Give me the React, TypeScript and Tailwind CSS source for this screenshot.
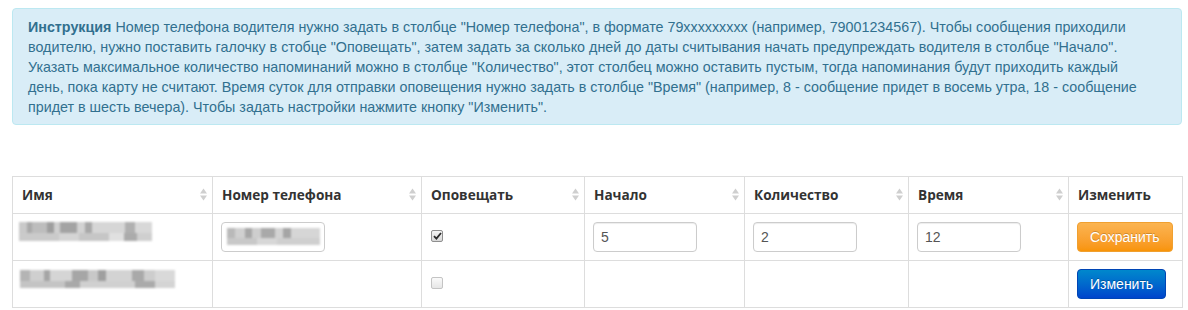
import React from "react";

type Block = [number, string];

function Mosaic({ top, bottom, topH, bottomH }: { top: Block[]; bottom: Block[]; topH: number; bottomH: number }) {
  const w = top.reduce((s, b) => s + b[0], 0);
  let x1 = 0;
  let x2 = 0;
  return (
    <svg width={w} height={topH + bottomH} className="block" style={{ filter: "blur(0.8px)" }}>
      {top.map(([bw, c], i) => {
        const el = <rect key={"t" + i} x={x1} y={0} width={bw} height={topH} fill={c} />;
        x1 += bw;
        return el;
      })}
      {bottom.map(([bw, c], i) => {
        const el = <rect key={"b" + i} x={x2} y={topH} width={bw} height={bottomH} fill={c} />;
        x2 += bw;
        return el;
      })}
    </svg>
  );
}

function SortIcon() {
  return (
    <svg width="7" height="13" viewBox="0 0 7 13" className="block">
      <polygon points="0,5.5 3.5,0.5 7,5.5" fill="#cfcfcf" />
      <polygon points="0,7.5 7,7.5 3.5,12.5" fill="#cfcfcf" />
    </svg>
  );
}

function Th({ children, sort = true }: { children: React.ReactNode; sort?: boolean }) {
  return (
    <th className="border border-[#dddddd] h-[37px] pl-[9px] pr-[5px] text-left align-middle font-bold text-[13.6px] text-[#333333] font-['Open_Sans',sans-serif]">
      <div className="flex items-center justify-between">
        <span>{children}</span>
        {sort && <SortIcon />}
      </div>
    </th>
  );
}

function Input({ value }: { value: string }) {
  return (
    <div className="w-[104px] h-[30px] border border-[#cccccc] rounded-[4px] shadow-[inset_0_1px_1px_rgba(0,0,0,0.075)] px-[7px] flex items-center text-[14px] text-[#555555] bg-white">
      {value}
    </div>
  );
}

function Checkbox({ checked }: { checked: boolean }) {
  return (
    <div
      className={
        "w-[12px] h-[12px] rounded-[2px] border flex items-center justify-center " +
        (checked ? "border-[#8f8f8f] bg-gradient-to-b from-[#f4f4f4] to-[#d8d8d8]" : "border-[#c4c4c4] bg-gradient-to-b from-[#fafafa] to-[#e6e6e6]")
      }
    >
      {checked && (
        <svg width="9" height="8" viewBox="0 0 9 8" className="block">
          <path d="M1 4.2 L3.4 6.6 L8 1" stroke="#2a2a2a" strokeWidth="1.8" fill="none" />
        </svg>
      )}
    </div>
  );
}

export default function App() {
  const td = "border border-[#dddddd] px-[8px] pt-[8px] pb-[8px] align-top";
  return (
    <div className="w-[1188px] h-[310px] bg-white overflow-hidden font-['Liberation_Sans',Arial,sans-serif]">
      <div className="ml-[12px] mt-[8px] w-[1170px] h-[117px] bg-[#d9edf7] border border-[#bce8f1] rounded-[4px] pl-[15px] pr-[10px] py-[8px] text-[14.3px] leading-[20px] text-[#31708f] whitespace-nowrap">
        <b>Инструкция</b> Номер телефона водителя нужно задать в столбце "Номер телефона", в формате 79xxxxxxxxx (например, 79001234567). Чтобы сообщения приходили
        <br />
        водителю, нужно поставить галочку в стобце "Оповещать", затем задать за сколько дней до даты считывания начать предупреждать водителя в столбце "Начало".
        <br />
        Указать максимальное количество напоминаний можно в столбце "Количество", этот столбец можно оставить пустым, тогда напоминания будут приходить каждый
        <br />
        день, пока карту не считают. Время суток для отправки оповещения нужно задать в столбце "Время" (например, 8 - сообщение придет в восемь утра, 18 - сообщение
        <br />
        придет в шесть вечера). Чтобы задать настройки нажмите кнопку "Изменить".
      </div>

      <table className="ml-[12px] mt-[51px] w-[1170px] table-fixed border-collapse">
        <colgroup>
          <col className="w-[200px]" />
          <col className="w-[209px]" />
          <col className="w-[163px]" />
          <col className="w-[160px]" />
          <col className="w-[164px]" />
          <col className="w-[160px]" />
          <col className="w-[114px]" />
        </colgroup>
        <thead>
          <tr>
            <Th>Имя</Th>
            <Th>Номер телефона</Th>
            <Th>Оповещать</Th>
            <Th>Начало</Th>
            <Th>Количество</Th>
            <Th>Время</Th>
            <Th sort={false}>Изменить</Th>
          </tr>
        </thead>
        <tbody>
          <tr className="h-[47px]">
            <td className={td + " pl-[6px]"}>
              <Mosaic
                topH={11}
                bottomH={8}
                top={[[8, "#c9c9c9"], [5, "#a9a9a9"], [15, "#bdbdbd"], [7, "#9e9e9e"], [6, "#cfcfcf"], [17, "#a3a3a3"], [8, "#d2d2d2"], [7, "#a8a8a8"], [33, "#d6d6d6"], [10, "#b0b0b0"], [17, "#d8d8d8"]]}
                bottom={[[40, "#cacaca"], [20, "#d4d4d4"], [30, "#c6c6c6"], [15, "#e0e0e0"], [13, "#ababab"], [15, "#cfcfcf"]]}
              />
            </td>
            <td className={td}>
              <div className="w-[104px] h-[30px] border border-[#cccccc] rounded-[4px] pl-[5px] pt-[5px] bg-white">
                <Mosaic
                  topH={10}
                  bottomH={7}
                  top={[[8, "#b9b9b9"], [10, "#d0d0d0"], [7, "#a7a7a7"], [9, "#cecece"], [14, "#a9a9a9"], [8, "#d3d3d3"], [8, "#a5a5a5"], [29, "#d6d6d6"]]}
                  bottom={[[30, "#c8c8c8"], [20, "#d7d7d7"], [43, "#cfcfcf"]]}
                />
              </div>
            </td>
            <td className={td + " pl-[9px] pt-[16px]"}>
              <Checkbox checked />
            </td>
            <td className={td}>
              <Input value="5" />
            </td>
            <td className={td}>
              <Input value="2" />
            </td>
            <td className={td}>
              <Input value="12" />
            </td>
            <td className={td}>
              <button className="h-[30px] px-[12px] rounded-[4px] border border-[#f0a030] bg-gradient-to-b from-[#fbb450] to-[#f89406] text-white text-[14px] [text-shadow:0_-1px_0_rgba(0,0,0,0.2)]">
                Сохранить
              </button>
            </td>
          </tr>
          <tr className="h-[47px]">
            <td className={td + " pl-[7px] pt-[9px]"}>
              <Mosaic
                topH={11}
                bottomH={7}
                top={[[10, "#b4b4b4"], [14, "#cfcfcf"], [6, "#a5a5a5"], [22, "#d5d5d5"], [16, "#a6a6a6"], [10, "#c8c8c8"], [8, "#9f9f9f"], [26, "#d3d3d3"], [12, "#a9a9a9"], [11, "#cdcdcd"], [20, "#d9d9d9"]]}
                bottom={[[45, "#c4c4c4"], [15, "#a9a9a9"], [55, "#d0d0d0"], [20, "#aaaaaa"], [20, "#d4d4d4"]]}
              />
            </td>
            <td className={td}></td>
            <td className={td + " pl-[9px] pt-[16px]"}>
              <Checkbox checked={false} />
            </td>
            <td className={td}></td>
            <td className={td}></td>
            <td className={td}></td>
            <td className={td}>
              <button className="h-[30px] px-[12px] rounded-[4px] border border-[#0045b5] bg-gradient-to-b from-[#0088cc] to-[#0044cc] text-white text-[14px] [text-shadow:0_-1px_0_rgba(0,0,0,0.25)]">
                Изменить
              </button>
            </td>
          </tr>
        </tbody>
      </table>
    </div>
  );
}
